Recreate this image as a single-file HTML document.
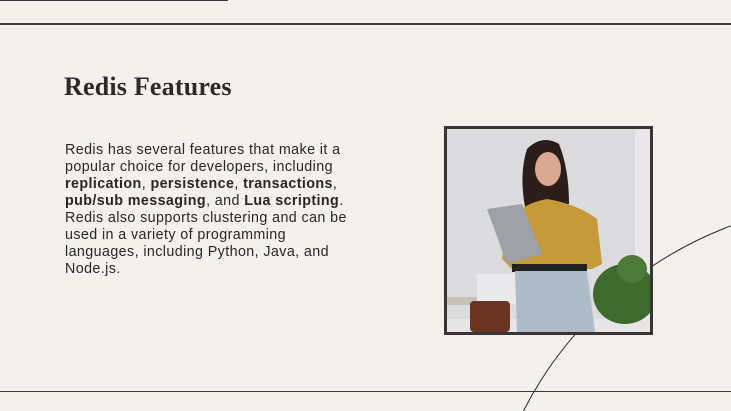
<!DOCTYPE html>
<html><head><meta charset="utf-8"><style>
html,body{margin:0;width:731px;height:411px;overflow:hidden}
body{background:#f4f1ec;position:relative;font-family:"Liberation Sans",sans-serif;color:#2b2626}
.abs{position:absolute}
h1{position:absolute;left:64px;top:72px;margin:0;font:bold 26px/30px "Liberation Serif",serif;color:#2e2a29;letter-spacing:0.2px}
.t{position:absolute;left:65px;top:142px;font-size:14.3px;line-height:17px;color:#2b2626;white-space:nowrap;letter-spacing:0.4px}
b{font-weight:bold}
</style></head><body>
<div class="abs" style="left:0;top:0;width:228px;height:1px;background:#3a3432"></div>
<div class="abs" style="left:0;top:23px;width:731px;height:2px;background:#3d3735"></div>
<div class="abs" style="left:0;top:391px;width:731px;height:1px;background:#3d3735"></div>
<svg class="abs" style="left:0;top:0;display:block" width="731" height="411"><circle cx="867" cy="587" r="386" fill="none" stroke="#2b2626" stroke-width="1"/></svg>
<h1>Redis Features</h1>
<div class="t">Redis has several features that make it a<br>popular choice for developers, including<br><b>replication</b>, <b>persistence</b>, <b>transactions</b>,<br><b>pub/sub messaging</b>, and <b>Lua scripting</b>.<br>Redis also supports clustering and can be<br>used in a variety of programming<br>languages, including Python, Java, and<br>Node.js.</div>
<div class="abs" style="left:444px;top:126px;width:203px;height:203px;border:3px solid #3a3434;background:#dddcde;overflow:hidden">
<svg width="203" height="203" viewBox="0 0 203 203" style="display:block">
<rect x="0" y="0" width="203" height="203" fill="#dcdbdd"/>
<rect x="188" y="0" width="15" height="203" fill="#e8e8ea"/>
<rect x="0" y="190" width="203" height="13" fill="#e6e6e6"/>
<rect x="30" y="145" width="40" height="30" fill="#e9e9eb"/>
<rect x="0" y="168" width="30" height="8" fill="#c9c2bb"/>
<rect x="23" y="172" width="40" height="31" rx="4" fill="#6b3420"/>
<ellipse cx="178" cy="165" rx="32" ry="30" fill="#3f6a2d"/>
<ellipse cx="185" cy="140" rx="15" ry="14" fill="#4d7a38"/>
<path d="M80 20 Q95 5 112 15 Q122 40 122 75 L78 78 Q72 45 80 20Z" fill="#2a1d1a"/>
<ellipse cx="101" cy="40" rx="13" ry="17" fill="#d9a890"/>
<path d="M60 95 Q72 75 100 70 Q130 75 150 90 L155 135 L145 140 L140 140 L65 140 L55 130Z" fill="#c59a3a"/>
<path d="M40 80 L75 75 L95 125 L60 135Z" fill="#9ea1a5"/>
<rect x="65" y="135" width="75" height="8" fill="#222"/>
<path d="M68 142 L140 142 L148 203 L70 203Z" fill="#aebcca"/>
</svg></div>
</body></html>
